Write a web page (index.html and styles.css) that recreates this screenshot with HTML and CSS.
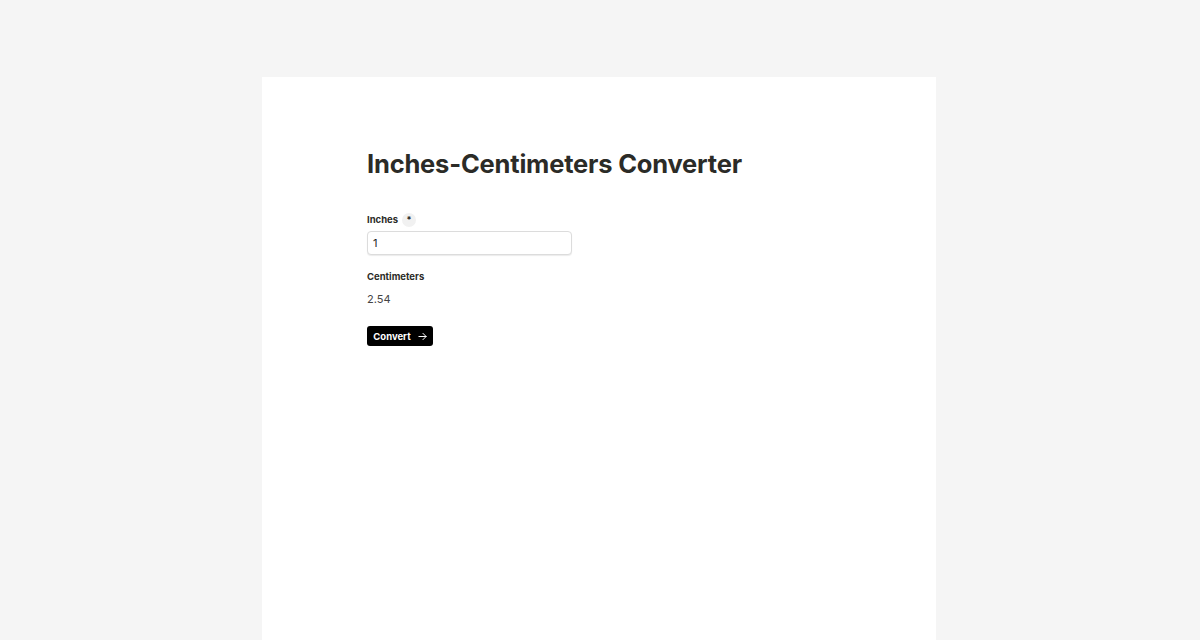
FILE: index.html
```html
<!DOCTYPE html>
<html lang="en">
<head>
    <meta charset="UTF-8">
    <meta name="viewport" content="width=device-width, initial-scale=1.0">
    <title>Inches-Centimeters Converter</title>
    <link rel="stylesheet" href="styles.css">
</head>
<body>

    <div class="card">
        <h1>Inches-Centimeters Converter</h1>

        <form class="converter">
            <label for="inches" class="field-label">Inches <span class="required">*</span></label>
            <input type="text" id="inches" name="inches" value="1">

            <div class="field-label result-label">Centimeters</div>
            <div class="result">2.54</div>

            <button type="button" class="convert-btn">
                Convert
                <svg width="9" height="9" viewBox="0 0 10 10" fill="none" stroke="currentColor" stroke-width="1.1" stroke-linecap="round" stroke-linejoin="round">
                    <path d="M1 5h8M5.5 1.5L9 5l-3.5 3.5"/>
                </svg>
            </button>
        </form>
    </div>

</body>
</html>
```

FILE: styles.css
```css
body {
    font-family: Inter, "Liberation Sans", Arial, sans-serif;
    background-color: #f5f5f5;
    margin: 0;
    padding: 0;
    color: #2b2b27;
}
.card {
    width: 674px;
    min-height: 563px;
    margin: 77px 0 0 calc(50% - 338px);
    background: white;
    padding: 72px 105px 0;
    box-sizing: border-box;
}
h1 {
    font-size: 25.5px;
    font-weight: 700;
    letter-spacing: -0.2px;
    margin: 0 0 34px;
    line-height: 30px;
    color: #2b2b27;
}
.converter {
    display: flex;
    flex-direction: column;
    align-items: flex-start;
}
.field-label {
    font-size: 9.5px;
    font-weight: 700;
    color: #2b2b27;
    display: flex;
    align-items: center;
    gap: 4px;
    line-height: 14px;
}
.required {
    width: 14px;
    height: 14px;
    border-radius: 50%;
    background: #f1f1f1;
    font-size: 9px;
    display: flex;
    align-items: center;
    justify-content: center;
}
input {
    width: 205px;
    height: 24px;
    box-sizing: border-box;
    margin-top: 4px;
    padding: 0 5px;
    border: 1px solid #dcdcdc;
    border-radius: 4px;
    box-shadow: 0 1px 1px rgba(0, 0, 0, 0.08);
    font-family: inherit;
    font-size: 11px;
    color: #222;
}
.result-label {
    margin-top: 15px;
}
.result {
    font-size: 11px;
    color: #444;
    margin-top: 8px;
    line-height: 14px;
}
.convert-btn {
    margin-top: 20px;
    height: 20px;
    width: 66px;
    background: #000;
    color: white;
    border: none;
    border-radius: 3px;
    font-family: inherit;
    font-size: 9.5px;
    font-weight: 700;
    display: flex;
    align-items: center;
    justify-content: center;
    gap: 7px;
    padding: 0;
    cursor: pointer;
}
```
